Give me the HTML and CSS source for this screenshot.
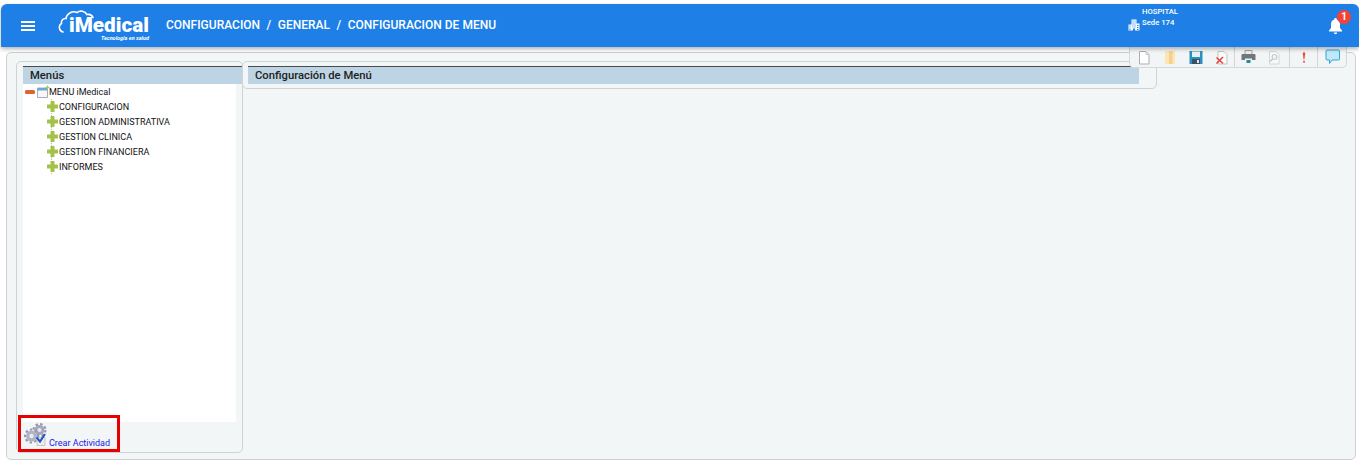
FILE: index.html
```html
<!DOCTYPE html>
<html lang="es">
<head>
<meta charset="utf-8">
<title>iMedical</title>
<link rel="stylesheet" href="styles.css">
</head>
<body>
<header class="topbar">
  <button class="menu-btn" aria-label="menu"><span></span><span></span><span></span></button>
  <div class="logo">
    <svg class="cloud" width="40" height="26" viewBox="0 0 40 26" fill="none" stroke="#fff" stroke-width="1.6" stroke-linecap="round">
      <path d="M5 22C1 21 0 15.500 3.500 13.500 3 10.500 5 8 8 8.500 9 3 14.500 .5 19 2.500 22 0 27 1 29 4.500 31.500 4 34 5 35 7.500"/>
    </svg>
    <span class="logo-name">iMedical</span>
    <span class="logo-tag">Tecnología en salud</span>
  </div>
  <nav class="crumbs"><span>CONFIGURACION</span><span>/</span><span>GENERAL</span><span>/</span><span>CONFIGURACION DE MENU</span></nav>
  <div class="site">
    <svg class="site-icon" width="12" height="12" viewBox="0 0 12 12" fill="#fff">
      <path fill-rule="evenodd" d="M3.500 .5h5v4H11.500v7H.5v-6h3zM4.500 1.500v1h1v-1zm2 0v1h1v-1zM4.500 3.500v1h1v-1zm2 0v1h1v-1zM1.500 6.500v1h1v-1zm0 2v1h1v-1zM4.500 5.500v1h1v-1zm2 0v1h1v-1zM4.500 7.500v1h1v-1zm2 0v1h1v-1zM9 6v1h1.500V6zm0 2v1h1.500V8zM1.500 10v1h1v-1zM5 9.500v2h2v-2zM9 10v1h1.500v-1z"/>
    </svg>
    <div class="site-text"><span>HOSPITAL</span><span>Sede 174</span></div>
  </div>
  <div class="bell">
    <svg width="15" height="17" viewBox="0 0 15 17" fill="#fff"><path d="M7.500 0a1.200 1.200 0 0 1 1.200 1.400C11 2 12 4 12 6.500V10l2 2.500v1H1v-1L3 10V6.500C3 4 4 2 6.300 1.400A1.200 1.200 0 0 1 7.500 0zM5.800 14.500h3.400a1.700 1.700 0 0 1-3.400 0z"/></svg>
    <span class="badge">1</span>
  </div>
</header>

<div class="toolbar">
  <span class="tool"><svg width="14" height="15" viewBox="0 0 14 15"><path d="M2.500 1.500H9l3 3v9.500H2.500z" fill="#fff" stroke="#aeaeae"/><path d="M9 1.500v3h3" fill="none" stroke="#c8c8c8"/></svg></span>
  <span class="tool"><svg width="14" height="15" viewBox="0 0 14 15"><path d="M2 1h10v13H2z" fill="#fbe6b4"/><path d="M6 1h3.500v4l-1 1 1 1v7H6z" fill="#f6cf8c"/></svg></span>
  <span class="tool"><svg width="14" height="15" viewBox="0 0 14 15"><path d="M.5 1h13v13H.5z" fill="#2c8fc0"/><path d="M3 1.500h8v5.500H3z" fill="#e6f3f8"/><path d="M3 9h8v5H3z" fill="#3b5260"/><path d="M8 10h2v3H8z" fill="#dfe8ec"/></svg></span>
  <span class="tool sep"><svg width="14" height="15" viewBox="0 0 14 15"><path d="M3 1.500h6l3 3v9.500H3z" fill="#fafafa" stroke="#c4c4c4"/><path d="M1.500 7.500l6.500 6m0-6.500l-6.500 6.500" stroke="#ea3f38" stroke-width="1.500"/></svg></span>
  <span class="tool"><svg width="15" height="14" viewBox="0 0 15 14"><path d="M4 .5h7v4H4z" fill="#eee" stroke="#a5a5a5"/><path d="M.5 5c0-.5.5-1 1-1h12c.5 0 1 .5 1 1v5h-14z" fill="#6f777b"/><path d="M4 8.500h7v5H4z" fill="#f2f2f2"/><path d="M5.500 10h4v3h-4z" fill="#1f8f98"/></svg></span>
  <span class="tool tool-wide sep"><svg width="14" height="15" viewBox="0 0 14 15"><path d="M2.500 1.500H9l3 3v9.500H2.500z" fill="#f8f8f8" stroke="#d6d6d6"/><circle cx="7.500" cy="7" r="2.500" fill="#eef3f6" stroke="#b8c2c9"/><path d="M5.500 9l-2.500 2.500" stroke="#b8c2c9" stroke-width="1.200"/></svg></span>
  <span class="tool tool-mid sep"><svg width="8" height="15" viewBox="0 0 8 15"><path d="M2.800 3.500a1.200 1.200 0 0 1 2.400 0L4.400 9.500H3.600z" fill="#ee4a3c"/><circle cx="4" cy="11.800" r="1" fill="#ee4a3c"/></svg></span>
  <span class="tool tool-mid"><svg width="15" height="16" viewBox="0 0 15 16"><path d="M2 1h11.500a1 1 0 0 1 1 1v8a1 1 0 0 1-1 1H7l-2.500 3.500V11H2a1 1 0 0 1-1-1V2a1 1 0 0 1 1-1z" fill="#bfe8f8" stroke="#35a5d6"/></svg></span>
</div>

<main class="content">
  <section class="panel panel-left">
    <h2 class="panel-title">Menús</h2>
    <div class="tree">
      <div class="tree-root">
        <svg class="minus" width="10" height="4" viewBox="0 0 10 4"><rect width="10" height="4" rx="1.500" fill="#e2622f"/></svg>
        <svg class="root-icon" width="13" height="13" viewBox="0 0 13 13"><path d="M.5 3h10v9.500H.5z" fill="#f7f7f7" stroke="#a4aeb5"/><path d="M.5 3h10v2.500H.5z" fill="#6fa6da"/><path d="M10.500 0l.8 1.700 1.700.8-1.700.8-.8 1.700-.8-1.700-1.700-.8 1.700-.8z" fill="#9ccb5a"/></svg>
        <span>MENU iMedical</span>
      </div>
      <ul class="tree-list">
        <li><svg class="plus" width="11" height="11" viewBox="0 0 11 11"><path d="M4 0h3a.5.5 0 0 1 .5.5V3.500h3a.5.5 0 0 1 .5.5v3a.5.5 0 0 1-.5.5h-3v3a.5.5 0 0 1-.5.5H4a.5.5 0 0 1-.5-.5v-3h-3A.5.5 0 0 1 0 7V4a.5.5 0 0 1 .5-.5h3v-3A.5.5 0 0 1 4 0z" fill="#a3c24c"/></svg>CONFIGURACION</li>
        <li><svg class="plus" width="11" height="11" viewBox="0 0 11 11"><path d="M4 0h3a.5.5 0 0 1 .5.5V3.500h3a.5.5 0 0 1 .5.5v3a.5.5 0 0 1-.5.5h-3v3a.5.5 0 0 1-.5.5H4a.5.5 0 0 1-.5-.5v-3h-3A.5.5 0 0 1 0 7V4a.5.5 0 0 1 .5-.5h3v-3A.5.5 0 0 1 4 0z" fill="#a3c24c"/></svg>GESTION ADMINISTRATIVA</li>
        <li><svg class="plus" width="11" height="11" viewBox="0 0 11 11"><path d="M4 0h3a.5.5 0 0 1 .5.5V3.500h3a.5.5 0 0 1 .5.5v3a.5.5 0 0 1-.5.5h-3v3a.5.5 0 0 1-.5.5H4a.5.5 0 0 1-.5-.5v-3h-3A.5.5 0 0 1 0 7V4a.5.5 0 0 1 .5-.5h3v-3A.5.5 0 0 1 4 0z" fill="#a3c24c"/></svg>GESTION CLINICA</li>
        <li><svg class="plus" width="11" height="11" viewBox="0 0 11 11"><path d="M4 0h3a.5.5 0 0 1 .5.5V3.500h3a.5.5 0 0 1 .5.5v3a.5.5 0 0 1-.5.5h-3v3a.5.5 0 0 1-.5.5H4a.5.5 0 0 1-.5-.5v-3h-3A.5.5 0 0 1 0 7V4a.5.5 0 0 1 .5-.5h3v-3A.5.5 0 0 1 4 0z" fill="#a3c24c"/></svg>GESTION FINANCIERA</li>
        <li><svg class="plus" width="11" height="11" viewBox="0 0 11 11"><path d="M4 0h3a.5.5 0 0 1 .5.5V3.500h3a.5.5 0 0 1 .5.5v3a.5.5 0 0 1-.5.5h-3v3a.5.5 0 0 1-.5.5H4a.5.5 0 0 1-.5-.5v-3h-3A.5.5 0 0 1 0 7V4a.5.5 0 0 1 .5-.5h3v-3A.5.5 0 0 1 4 0z" fill="#a3c24c"/></svg>INFORMES</li>
      </ul>
    </div>
    <div class="action">
      <svg class="action-icon" width="24" height="24" viewBox="0 0 24 24">
        <circle cx="15.500" cy="7" r="5" fill="#a3a6bd"/>
        <circle cx="15.500" cy="7" r="6" fill="none" stroke="#9598b0" stroke-width="2" stroke-dasharray="2.500 2.200"/>
        <circle cx="15.500" cy="7" r="2" fill="#e6e7ee"/>
        <circle cx="7.500" cy="13" r="5.500" fill="#b0b2c6"/>
        <circle cx="7.500" cy="13" r="6.500" fill="none" stroke="#9598b0" stroke-width="2" stroke-dasharray="2.500 2.200"/>
        <circle cx="7.500" cy="13" r="2.200" fill="#eceDf3"/>
        <path d="M13 14.500h8v8h-8z" fill="#ececec" stroke="#b5b5b5" stroke-width=".7"/>
        <path d="M12.500 14.500l3.500 4 5-7.500" fill="none" stroke="#2452c4" stroke-width="2"/>
      </svg>
      <a class="action-link" href="#">Crear Actividad</a>
    </div>
  </section>
  <section class="panel panel-right">
    <h2 class="panel-title">Configuración de Menú</h2>
  </section>
</main>
</body>
</html>
```
FILE: styles.css
```css
* { box-sizing: border-box; }
html, body { height: 100%; }
body {
  margin: 0;
  height: 465px;
  overflow: hidden;
  background: #fff;
  font-family: Roboto, "Liberation Sans", sans-serif;
  padding: 4px 0 5px 1px;
  display: flex;
  flex-direction: column;
  position: relative;
}
.topbar {
  height: 43px;
  flex: none;
  background: #1e7fe6;
  border-radius: 6px 6px 0 0;
  box-shadow: 0 2px 4px rgba(0,0,0,.3);
  display: flex;
  align-items: center;
  color: #fff;
  position: relative;
  z-index: 2;
}
.menu-btn {
  width: 14px;
  height: 10px;
  margin-left: 20px;
  padding: 0;
  border: 0;
  background: none;
  display: flex;
  flex-direction: column;
  justify-content: space-between;
}
.menu-btn span { display: block; height: 2px; background: #fff; }
.logo {
  position: relative;
  width: 92px;
  height: 36px;
  margin-left: 23px;
  flex: none;
  align-self: flex-start;
  margin-top: 5px;
}
.cloud { position: absolute; left: 0; top: 1px; }
.logo-name {
  position: absolute;
  left: 11px;
  top: 7px;
  font: 900 20.700px/18px Roboto, sans-serif;
}
.logo-tag {
  position: absolute;
  right: 1px;
  top: 26px;
  font: italic 700 5.500px/6px Roboto, sans-serif;
  white-space: nowrap;
}
.crumbs {
  margin-left: 16px;
  display: flex;
  gap: 6.500px;
  font-size: 12px;
  font-weight: 500;
  white-space: nowrap;
  margin-top: -1px;
}
.site {
  margin-left: auto;
  margin-right: 181px;
  display: flex;
  align-items: flex-end;
  gap: 2px;
  margin-top: -17px;
}
.site-icon { margin-bottom: -4px; }
.site-text {
  display: flex;
  flex-direction: column;
  gap: 3px;
  font-size: 7.700px;
  font-weight: 500;
  line-height: 8px;
}
.bell { position: absolute; left: 1327px; top: 14px; width: 15px; height: 17px; }
.bell svg { display: block; }
.badge {
  position: absolute;
  left: 9px;
  top: -8px;
  width: 14px;
  height: 14px;
  border-radius: 50%;
  background: #f44336;
  font-size: 10px;
  font-weight: 700;
  line-height: 14px;
  text-align: center;
}
.toolbar {
  position: absolute;
  left: 1129px;
  top: 47px;
  width: 218px;
  height: 21px;
  background: #f2f5f6;
  border: 1px solid #d8d8d8;
  border-top: 0;
  border-radius: 0 0 5px 5px;
  display: flex;
  align-items: center;
  padding: 0 0 0 1px;
  z-index: 1;
}
.tool { width: 26px; height: 20px; display: flex; align-items: center; justify-content: center; flex: none; }
.tool-wide { width: 29px; padding-right: 3px; }
.tool-mid { width: 28px; }
.tool.sep { border-right: 1px solid #d4d4d4; }
.tool svg { display: block; }
.content {
  flex: 1;
  margin: 5px 3px 0 5px;
  background: #f2f6f7;
  border: 1px solid #cfcfcf;
  border-radius: 5px;
  padding: 8px 0 0 9px;
  display: flex;
  align-items: flex-start;
  min-height: 0;
}
.panel {
  border: 1px solid #cfd3d5;
  border-radius: 5px;
  padding-top: 4px;
  flex: none;
}
.panel-left {
  width: 227px;
  height: 392px;
  display: flex;
  flex-direction: column;
  padding-left: 6px;
}
.panel-right {
  width: 915px;
  height: 28px;
  margin-left: -1px;
  padding: 4px 17px 0 5px;
  position: relative;
}
.panel-title {
  margin: 0;
  height: 18px;
  background: #bcd4e3;
  border-top: 1px solid #4a4a4a;
  color: #222;
  font-size: 11.250px;
  font-weight: 500;
  line-height: 17px;
  padding-left: 7px;
  flex: none;
}
.tree {
  width: 213px;
  height: 338px;
  background: #fff;
  flex: none;
  font-size: 9px;
  color: #111;
  padding-top: 1px;
}
.tree-root {
  height: 14px;
  display: flex;
  align-items: center;
  padding-left: 2px;
}
.minus { margin-right: 2px; }
.root-icon { margin-right: -1px; margin-top: -2px; }
.tree-list {
  margin: 0;
  padding: 0;
  list-style: none;
  margin-left: 28px;
  border-left: 1px dotted #b9b9b9;
  height: 75px;
}
.tree-list li {
  height: 15px;
  display: flex;
  align-items: center;
  margin-left: -5px;
  gap: 1px;
  white-space: nowrap;
}
.plus { flex: none; }
.action {
  display: flex;
  align-items: flex-end;
  gap: 1px;
  width: 102px;
  height: 41px;
  margin: -7px 0 0 -5px;
  border: 3px solid #e60000;
  padding: 0 0 0 3px;
  position: relative;
}
.action-icon { margin-bottom: 2px; }
.action-link {
  color: #1a1ae6;
  font-size: 9px;
  line-height: 11px;
  text-decoration: none;
}
```
